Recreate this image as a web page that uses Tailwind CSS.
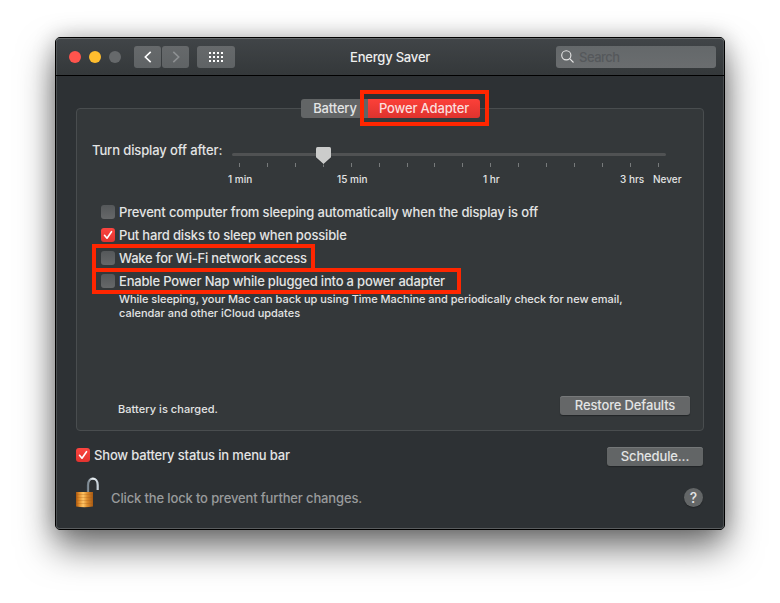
<!DOCTYPE html>
<html lang="en">
<head>
<meta charset="utf-8">
<title>Energy Saver</title>
<script src="https://cdn.jsdelivr.net/npm/@tailwindcss/browser@4"></script>
</head>
<body class="relative h-[603px] w-[780px] overflow-hidden bg-white pt-[37px] pl-[55px] font-['Inter','Liberation_Sans',sans-serif] text-[13px] leading-4 font-[450] text-[#e3e4e4]">
<main class="flex h-[493px] w-[670px] flex-col rounded-[5px] border border-black bg-[#2d3134] shadow-[0_18px_36px_rgba(0,0,0,0.55),0_0_22px_rgba(0,0,0,0.22)]">
  <header class="relative flex h-[38px] shrink-0 items-center rounded-t-[4px] border-b border-black bg-linear-to-b from-[#414548] to-[#34383a] pr-[8px] pl-[13px] shadow-[inset_0_1px_0_#65696b,inset_1px_0_0_#505456,inset_-1px_0_0_#505456]">
    <div class="flex gap-[8px]">
      <span class="size-[12px] rounded-full bg-[#ff544d]"></span>
      <span class="size-[12px] rounded-full bg-[#ffbd2e]"></span>
      <span class="size-[12px] rounded-full bg-[#66696b]"></span>
    </div>
    <div class="ml-[13px] flex gap-px">
      <button class="flex h-[22px] w-[27px] items-center justify-center rounded-[3px] bg-linear-to-b from-[#66696b] to-[#5f6365]"><svg width="10" height="14" viewBox="0 0 10 14" fill="none" stroke="#fff" stroke-width="1.6"><path d="M7.700 1.800 2.300 7l5.400 5.200"/></svg></button>
      <button class="flex h-[22px] w-[27px] items-center justify-center rounded-[3px] bg-linear-to-b from-[#66696b] to-[#5f6365]"><svg width="10" height="14" viewBox="0 0 10 14" fill="none" stroke="#8d9092" stroke-width="1.6"><path d="M2.300 1.800 7.700 7l-5.400 5.200"/></svg></button>
    </div>
    <button class="ml-[8px] flex h-[22px] w-[38px] items-center justify-center rounded-[3px] bg-linear-to-b from-[#66696b] to-[#5f6365]"><svg width="14" height="10" viewBox="0 0 14 10" fill="#fff"><path d="M0 0h2v2H0zM4 0h2v2H4zM8 0h2v2H8zM12 0h2v2h-2zM0 4h2v2H0zM4 4h2v2H4zM8 4h2v2H8zM12 4h2v2h-2zM0 8h2v2H0zM4 8h2v2H4zM8 8h2v2H8zM12 8h2v2h-2z"/></svg></button>
    <h1 class="ml-[115px] tracking-[-0.2px] whitespace-nowrap text-[#eeeeee]">Energy Saver</h1>
    <div class="ml-auto flex h-[22px] w-[160px] items-center rounded-[3px] bg-linear-to-b from-[#64686a] to-[#6a6d6f] pl-[5px]">
      <svg width="13" height="13" viewBox="0 0 13 13" fill="none" stroke="#e6e6e6" stroke-width="1.1"><circle cx="5.3" cy="5.3" r="4.6"/><path d="m8.7 8.7 3.8 3.8"/></svg>
      <span class="ml-[5px] tracking-[-0.5px] text-[#55585b]">Search</span>
    </div>
  </header>
  <div class="flex grow flex-col rounded-b-[4px] px-[20px] pt-[32px] shadow-[inset_1px_0_0_#4a4e50,inset_-1px_0_0_#4a4e50,inset_0_-1px_0_#5a5d5f]">
    <section class="flex h-[323px] w-[628px] shrink-0 flex-col rounded-[4px] border border-[#494d4f] bg-[#34383a]">
      <div class="-mt-[10px] ml-[224px] flex h-[19px] w-[179px] overflow-hidden rounded-[3px] text-center leading-[19px] tracking-[-0.15px]">
        <span class="w-[67px] bg-[#626566] pl-px">Battery</span>
        <span class="w-[112px] bg-linear-to-b from-[#fc4039] to-[#de332e] text-[#fbdedd]">Power Adapter</span>
      </div>
      <div class="mt-[24px] flex h-[48px] shrink-0 pl-[15px]">
        <label class="w-[140px] tracking-[-0.12px] whitespace-nowrap">Turn display off after:</label>
        <div class="relative w-[434px] pt-[11px]">
          <div class="h-[3px] rounded-full bg-[#505253]"></div>
          <div class="mt-[7px] flex justify-between pr-[7px] pl-[7px]" id="ticks"></div>
          <svg class="absolute top-[5px] left-[83px]" width="17" height="19" viewBox="0 0 17 19"><path d="M1 2.5Q1 1 2.5 1h12Q16 1 16 2.5V11l-7.5 7L1 11z" fill="#1f2224" opacity=".5"/><path d="M1 1.5Q1 0 2.5 0h12Q16 0 16 1.5v8.8L8.5 17 1 10.300z" fill="#cbcccb"/></svg>
          <div class="-ml-[4px] flex w-[454px] pt-[5px] text-[10px] leading-[14px] whitespace-nowrap">
            <span class="w-[109px]">1 min</span><span class="w-[146px]">15 min</span><span class="w-[137px]">1 hr</span><span class="w-[33px]">3 hrs</span><span>Never</span>
          </div>
        </div>
      </div>
      <div class="mt-[14px] flex flex-col gap-[7px] pl-[24px] whitespace-nowrap">
        <label class="flex h-[16px] items-center gap-[4px]"><i class="size-[14px] rounded-[3px] bg-linear-to-b from-[#55585a] to-[#666869]"></i><span class="tracking-[-0.15px]">Prevent computer from sleeping automatically when the display is off</span></label>
        <label class="flex h-[16px] items-center gap-[4px]"><i class="size-[14px] rounded-[3px] bg-linear-to-b from-[#fc4540] to-[#e2332f]"><svg width="14" height="14" fill="none" stroke="#fff" stroke-width="1.6" stroke-linecap="round" stroke-linejoin="round"><path d="m3.500 7.300 2.500 2.900 4.500-6.500"/></svg></i><span class="tracking-[-0.17px]">Put hard disks to sleep when possible</span></label>
        <label class="flex h-[16px] items-center gap-[4px]"><i class="size-[14px] rounded-[3px] bg-linear-to-b from-[#55585a] to-[#666869]"></i><span class="tracking-[-0.21px]">Wake for Wi-Fi network access</span></label>
        <label class="flex h-[16px] items-center gap-[4px]"><i class="size-[14px] rounded-[3px] bg-linear-to-b from-[#55585a] to-[#666869]"></i><span class="tracking-[-0.18px]">Enable Power Nap while plugged into a power adapter</span></label>
      </div>
      <p class="relative z-10 mt-[3px] pl-[42px] text-[11px] leading-[14px] whitespace-nowrap"><span class="tracking-[-0.04px]">While sleeping, your Mac can back up using Time Machine and periodically check for new email,</span><br>calendar and other iCloud updates</p>
      <div class="mt-auto mb-[15px] flex h-[19px] items-center justify-between pr-[13px] pl-[41px]">
        <span class="pt-[7px] text-[11px] tracking-[0.05px]">Battery is charged.</span>
        <button class="h-[19px] w-[130px] rounded-[3px] bg-[#656768] leading-[19px] tracking-[-0.14px] shadow-[0_1px_1px_#222527,inset_0_1px_0_#77797a]">Restore Defaults</button>
      </div>
    </section>
    <div class="mt-[16px] flex h-[19px] items-center justify-between pr-[1px]">
      <label class="flex items-center gap-[4px] pb-[3px]"><i class="size-[14px] rounded-[3px] bg-linear-to-b from-[#fc4540] to-[#e2332f]"><svg width="14" height="14" fill="none" stroke="#fff" stroke-width="1.6" stroke-linecap="round" stroke-linejoin="round"><path d="m3.500 7.300 2.500 2.900 4.500-6.500"/></svg></i><span class="tracking-[-0.16px]">Show battery status in menu bar</span></label>
      <button class="h-[19px] w-[96px] rounded-[3px] bg-[#626566] leading-[19px] tracking-[-0.14px] shadow-[0_1px_1px_#222527,inset_0_1px_0_#747778]">Schedule...</button>
    </div>
    <div class="mt-[11px] flex h-[32px] items-center pr-[1px]">
      <svg class="shrink-0" width="26" height="32" viewBox="0 0 26 32">
        <defs>
          <linearGradient id="brass"><stop stop-color="#a8560f"/><stop offset=".18" stop-color="#e08c2a"/><stop offset=".42" stop-color="#ffc565"/><stop offset=".65" stop-color="#dd8d2d"/><stop offset="1" stop-color="#a85a12"/></linearGradient>
          <linearGradient id="steel"><stop stop-color="#75828c"/><stop offset=".5" stop-color="#f3f8fb"/><stop offset="1" stop-color="#c5d0d8"/></linearGradient>
        </defs>
        <path d="M12 15.500V8C12 -.5 21.700 -.5 21.700 8v5" fill="none" stroke="url(#steel)" stroke-width="2.200"/>
        <path d="M0 15h17v14.500q-8.500 1.500-17 0z" fill="url(#brass)"/>
        <path d="M0 17.500h17M0 20.500h17M0 23.500h17M0 26.500h17" stroke="#a55b18" stroke-opacity=".35" stroke-width=".8"/>
      </svg>
      <span class="ml-[9px] pt-[9px] tracking-[-0.14px] text-[#999b9c]">Click the lock to prevent further changes.</span>
      <button class="mt-[8px] ml-auto size-[19px] rounded-full bg-[#636667] text-center text-[14px] leading-[19px] shadow-[0_1px_1px_#222527]">?</button>
    </div>
  </div>
</main>
<div class="absolute top-[90px] left-[360px] h-[36px] w-[129px] border-4 border-[#ff2600]"></div>
<div class="absolute top-[244px] left-[92px] h-[28px] w-[223px] border-4 border-[#ff2600]"></div>
<div class="absolute top-[268px] left-[92px] h-[26px] w-[369px] border-4 border-[#ff2600]"></div>
<script>
document.getElementById('ticks').innerHTML = '<i class="h-[4px] w-px bg-[#777a7b]"></i>'.repeat(16);
</script>
</body>
</html>
